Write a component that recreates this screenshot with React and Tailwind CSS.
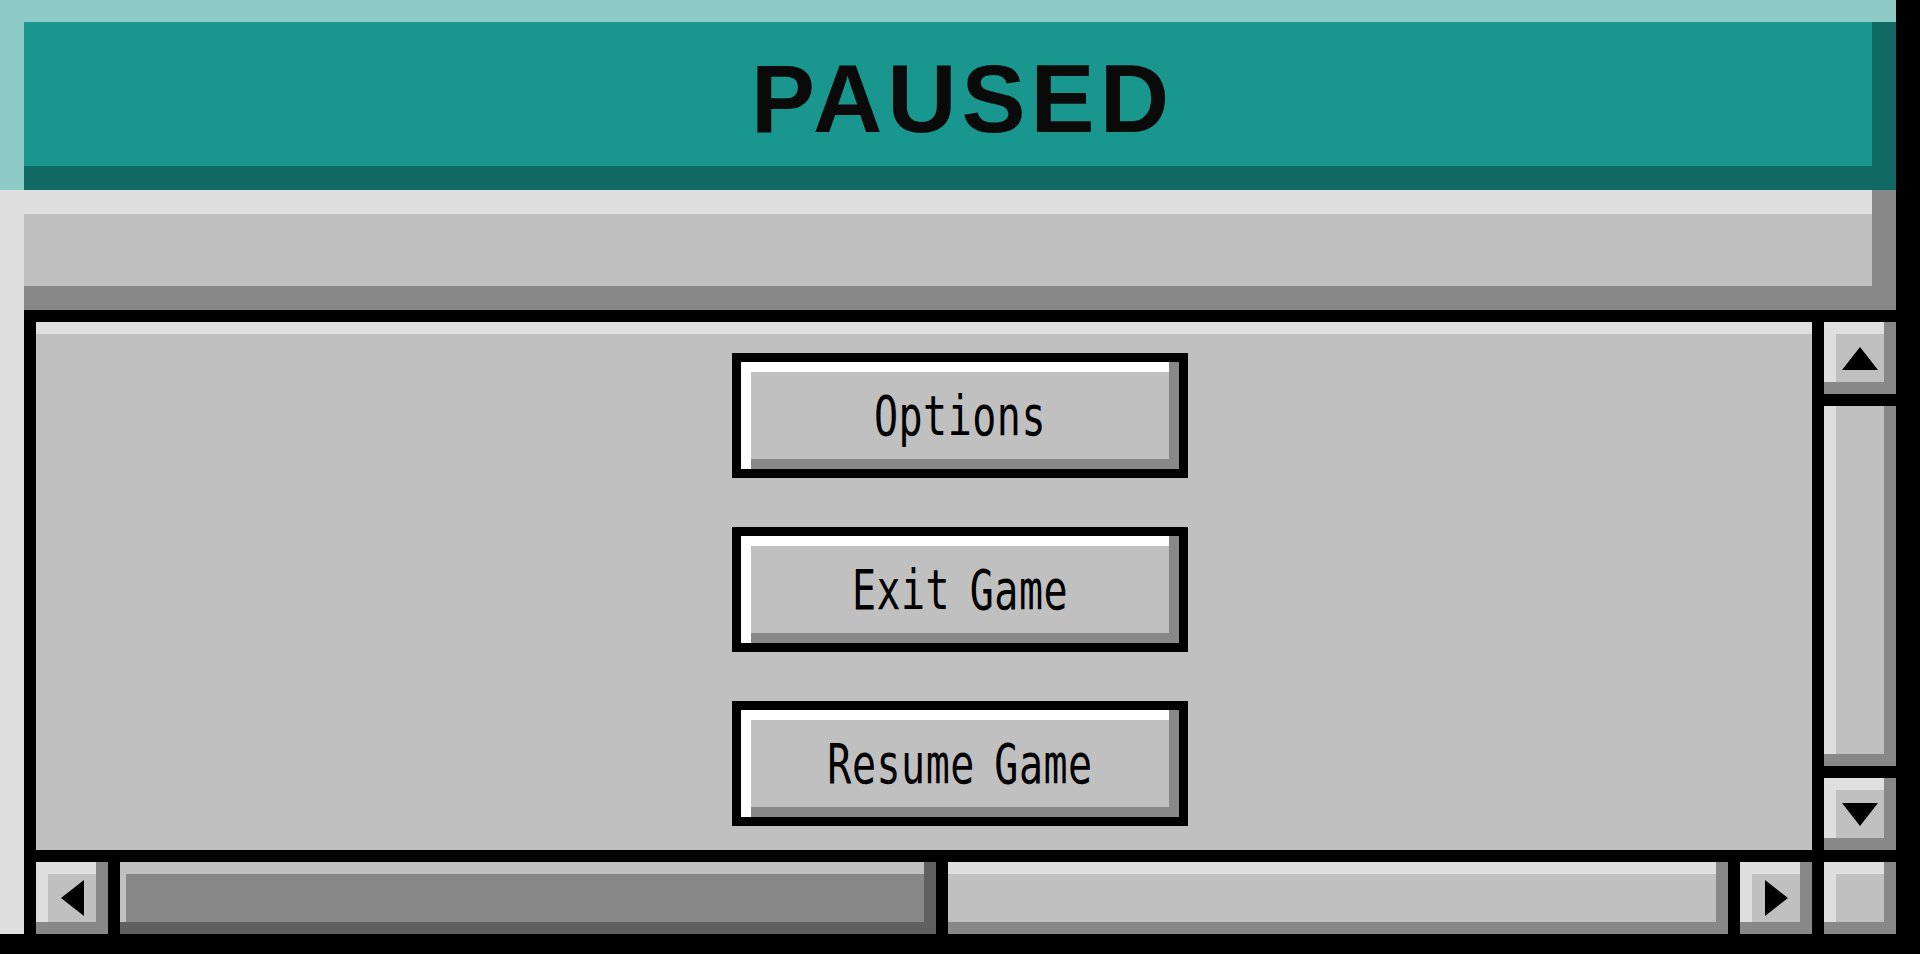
import React from "react";

const menuItems = ["Options", "Exit Game", "Resume Game"];

function Arrow({ dir }) {
  const pts = {
    up: "18,0 36,23 0,23",
    down: "0,0 36,0 18,23",
    left: "23,0 23,36 0,18",
    right: "0,0 23,18 0,36",
  };
  const vertical = dir === "up" || dir === "down";
  return (
    <svg
      width={vertical ? 36 : 23}
      height={vertical ? 23 : 36}
      viewBox={vertical ? "0 0 36 23" : "0 0 23 36"}
    >
      <polygon points={pts[dir]} fill="#000" />
    </svg>
  );
}

function ScrollButton({ dir }) {
  return (
    <div className="w-[72px] h-[72px] bg-[#c0c0c0] flex items-center justify-center shadow-[inset_-12px_-12px_0_#888888,inset_12px_12px_0_#dfdfdf]">
      {dir && <Arrow dir={dir} />}
    </div>
  );
}

function MenuButton({ label }) {
  return (
    <button className="w-[456px] h-[125px] border-[9px] border-black bg-black flex">
      {/* bevel: left/right full height, top/bottom inside */}
      <div className="flex-1 flex border-l-[10px] border-l-white border-r-[10px] border-r-[#888888]">
        <div className="flex-1 flex items-center justify-center bg-[#c0c0c0] border-t-[10px] border-t-white border-b-[10px] border-b-[#888888]">
          <span className="inline-block scale-y-[1.38] text-[40px] leading-none tracking-[0.5px] [word-spacing:-5px] text-black font-['DejaVu_Sans_Mono',monospace]">
            {label}
          </span>
        </div>
      </div>
    </button>
  );
}

export default function App() {
  return (
    <div className="w-[1920px] h-[954px] bg-black overflow-hidden">
      <div className="w-[1896px] h-[934px] flex flex-col">

        {/* Title bar */}
        <div className="h-[190px] bg-[#19968e] flex justify-center pt-[51px] shadow-[inset_24px_22px_0_#8ecbc6,inset_-24px_-24px_0_#116963]">
          <h1 className="ml-[24px] text-[96px] leading-none font-bold tracking-[5px] pl-[5px] text-[#0a0a0a] font-['Liberation_Sans',Arial,sans-serif]">
            PAUSED
          </h1>
        </div>

        {/* Toolbar strip */}
        <div className="h-[120px] flex border-l-[24px] border-l-[#dfdfdf] border-r-[24px] border-r-[#888888]">
          <div className="flex-1 bg-[#c0c0c0] border-t-[24px] border-t-[#dfdfdf] border-b-[24px] border-b-[#888888]" />
        </div>

        {/* Body */}
        <div className="flex-1 flex">
          <div className="w-[24px] bg-[#dfdfdf]" />
          <div className="flex-1 bg-black pl-3 pt-3 grid grid-cols-[1776px_72px] grid-rows-[528px_72px] gap-3">

            {/* Content */}
            <div className="bg-[#c0c0c0] border-t-[12px] border-t-[#dfdfdf] flex flex-col items-center pl-[72px] pt-[19px] gap-[49px]">
              {menuItems.map((item) => (
                <MenuButton key={item} label={item} />
              ))}
            </div>

            {/* Vertical scrollbar */}
            <div className="flex flex-col gap-3">
              <ScrollButton dir="up" />
              <div className="flex-1 bg-[#c0c0c0] shadow-[inset_-12px_-12px_0_#888888,inset_12px_0_0_#dfdfdf]" />
              <ScrollButton dir="down" />
            </div>

            {/* Horizontal scrollbar */}
            <div className="flex gap-3">
              <ScrollButton dir="left" />
              <div className="w-[816px] bg-[#888888] shadow-[inset_-12px_-12px_0_#606060,inset_6px_12px_0_#c0c0c0]" />
              <div className="flex-1 bg-[#c0c0c0] shadow-[inset_-12px_-12px_0_#888888,inset_0_12px_0_#dfdfdf]" />
              <ScrollButton dir="right" />
            </div>

            {/* Corner */}
            <ScrollButton />
          </div>
        </div>

      </div>
    </div>
  );
}
